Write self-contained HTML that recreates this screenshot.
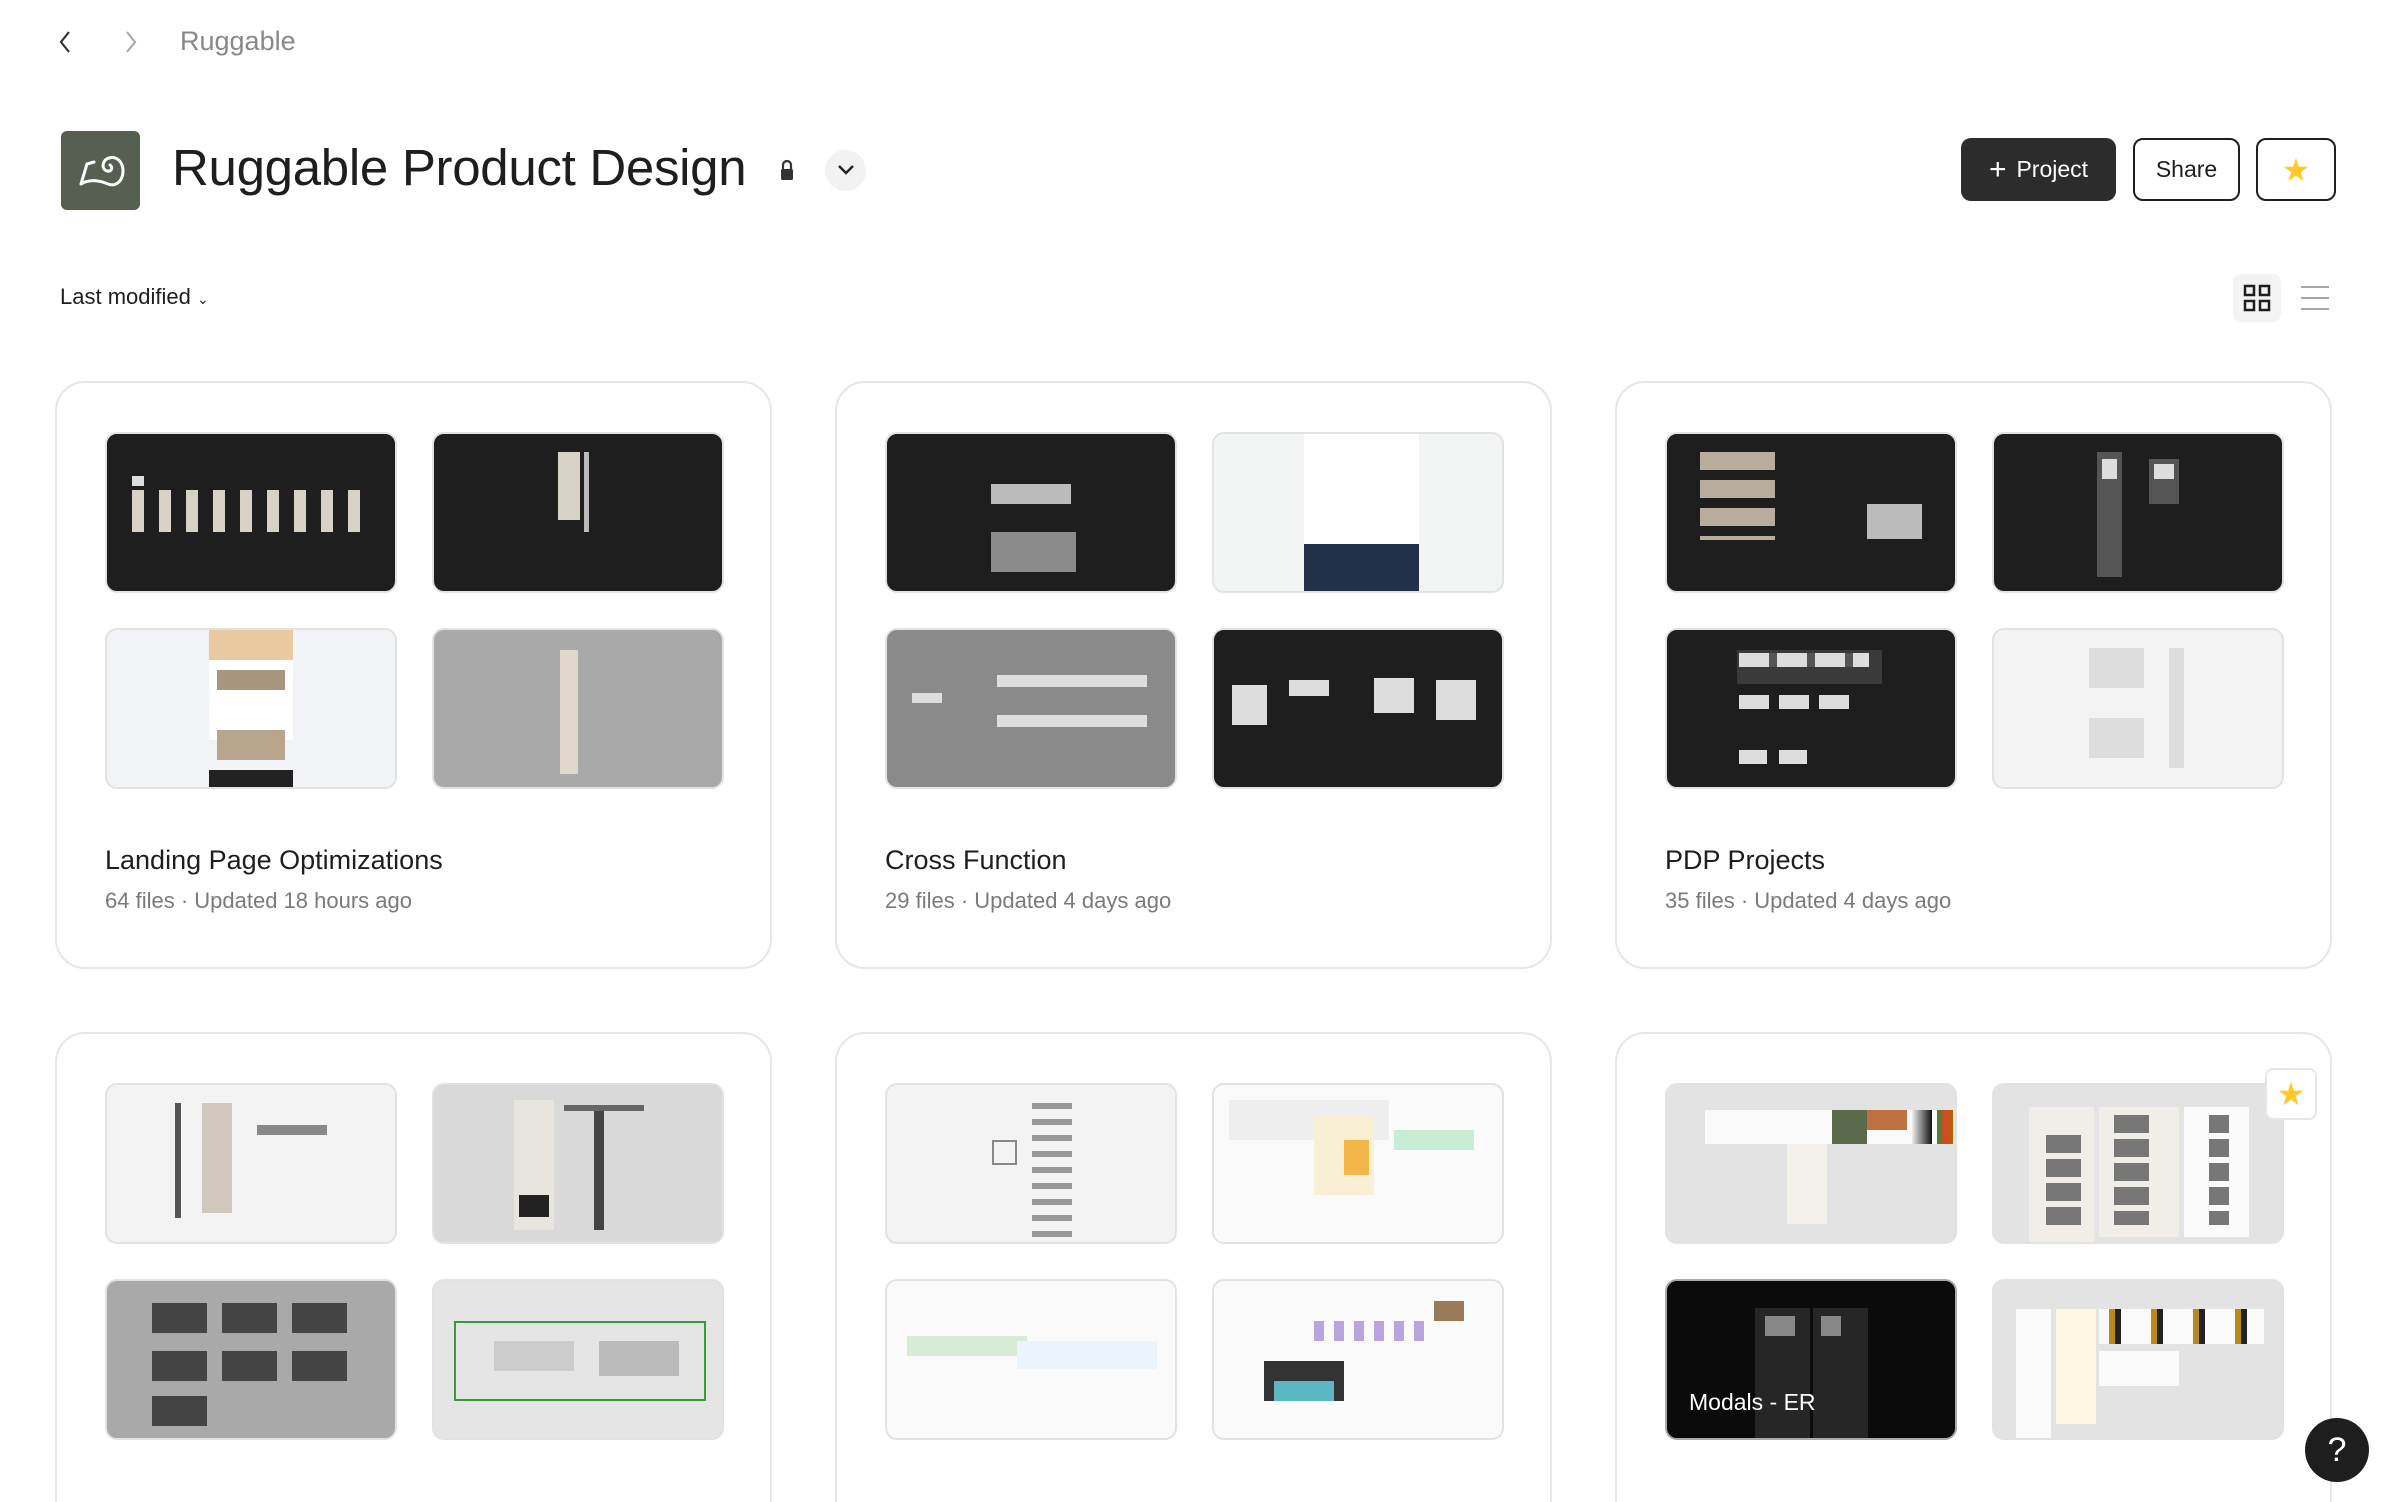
<!DOCTYPE html>
<html><head><meta charset="utf-8"><style>
*{margin:0;padding:0;box-sizing:border-box}
html{width:2384px;height:1502px;overflow:hidden}
body{width:2384px;height:1502px;background:#fff;font-family:"Liberation Sans",sans-serif;position:relative;overflow:hidden;color:#1e1e1e}
.a{position:absolute}
.card{position:absolute;width:717px;height:588px;border:2px solid #e6e6e6;border-radius:30px;background:#fff}
.th{position:absolute;width:292px;height:161px;border-radius:12px;border:2px solid #e2e2e2;overflow:hidden}
.th div{position:absolute}
.t1{position:absolute;left:48px;top:462px;font-size:27px;font-weight:500;color:#1e1e1e}
.t2{position:absolute;left:48px;top:505px;font-size:22px;color:#7a7a7a}
.btn{position:absolute;top:138px;height:63px;border-radius:10px;font-size:23px;display:flex;align-items:center;justify-content:center}
</style></head><body>
<svg class="a" style="left:58px;top:30px" width="14" height="24" viewBox="0 0 14 24"><path d="M11 2 L3 12 L11 22" fill="none" stroke="#333" stroke-width="2.2"/></svg>
<svg class="a" style="left:124px;top:30px" width="14" height="24" viewBox="0 0 14 24"><path d="M3 2 L11 12 L3 22" fill="none" stroke="#aaa" stroke-width="2.2"/></svg>
<div class="a" style="left:180px;top:26px;font-size:27px;color:#888">Ruggable</div>

<div class="a" style="left:61px;top:131px;width:79px;height:79px;border-radius:6px;background:#566050"></div>
<svg class="a" style="left:61px;top:131px" width="79" height="79" viewBox="0 0 79 79"><path d="M20 53 L26 33 L33 31 M20 53 C30 47 40 50 47 53 C55 56 62 50 62 40 C62 30 55 25 48 27 C41 29 40 38 46 40 C51 41 52 36 49 34" fill="none" stroke="#fff" stroke-width="3" stroke-linecap="round"/></svg>
<div class="a" style="left:172px;top:138px;font-size:51px;color:#1e1e1e;letter-spacing:-0.3px">Ruggable Product Design</div>
<svg class="a" style="left:779px;top:158px" width="16" height="24" viewBox="0 0 16 24"><path d="M4 11 V7 a4 4 0 0 1 8 0 V11" fill="none" stroke="#333" stroke-width="2.2"/><rect x="2" y="11" width="12" height="11" rx="1.5" fill="#333"/></svg>
<div class="a" style="left:825px;top:150px;width:41px;height:41px;border-radius:50%;background:#f2f2f2"></div>
<svg class="a" style="left:836px;top:163px" width="20" height="14" viewBox="0 0 20 14"><path d="M3 3 L10 10 L17 3" fill="none" stroke="#222" stroke-width="2.4"/></svg>

<div class="btn" style="left:1961px;width:155px;background:#2c2c2c;color:#fff;font-weight:500"><span style="font-size:30px;font-weight:300;margin-right:10px">+</span>Project</div>
<div class="btn" style="left:2133px;width:107px;border:2px solid #1e1e1e;color:#1e1e1e">Share</div>
<div class="btn" style="left:2256px;width:80px;border:2px solid #1e1e1e;color:#ffc928;font-size:32px">★</div>

<div class="a" style="left:60px;top:284px;font-size:22px;color:#1e1e1e">Last modified <span style="font-size:14px">&#8964;</span></div>
<div class="a" style="left:2233px;top:274px;width:48px;height:48px;border-radius:8px;background:#f3f3f3"></div>
<svg class="a" style="left:2243px;top:284px" width="28" height="28" viewBox="0 0 28 28"><g fill="none" stroke="#1e1e1e" stroke-width="2.5"><rect x="2" y="2" width="9" height="9"/><rect x="17" y="2" width="9" height="9"/><rect x="2" y="17" width="9" height="9"/><rect x="17" y="17" width="9" height="9"/></g></svg>
<svg class="a" style="left:2300px;top:285px" width="30" height="26" viewBox="0 0 30 26"><g stroke="#a6a6a6" stroke-width="2"><path d="M1 2H29M1 13H29M1 24H29"/></g></svg>

<!-- Row 1 -->
<div class="card" style="left:55px;top:381px">
 <div class="th" style="left:48px;top:49px;background:#1e1e1e"><div style="left:25px;top:56px;width:240px;height:42px;background:repeating-linear-gradient(90deg,#d8d2c6 0 12px,transparent 12px 27px)"></div><div style="left:25px;top:42px;width:12px;height:10px;background:#ddd"></div></div>
 <div class="th" style="left:375px;top:49px;background:#1e1e1e"><div style="left:124px;top:18px;width:22px;height:68px;background:#d8d2c6"></div><div style="left:150px;top:18px;width:5px;height:80px;background:#bbb"></div></div>
 <div class="th" style="left:48px;top:245px;background:#f2f3f7"><div style="left:102px;top:0;width:84px;height:30px;background:#e8c9a0"></div><div style="left:102px;top:30px;width:84px;height:80px;background:#fff"></div><div style="left:110px;top:40px;width:68px;height:20px;background:#a89580"></div><div style="left:102px;top:140px;width:84px;height:20px;background:#222"></div><div style="left:110px;top:100px;width:68px;height:30px;background:#b9a58c"></div></div>
 <div class="th" style="left:375px;top:245px;background:#a9a9a9"><div style="left:126px;top:20px;width:18px;height:124px;background:#e0d8cc"></div></div>
 <div class="t1">Landing Page Optimizations</div><div class="t2">64 files · Updated 18 hours ago</div>
</div>
<div class="card" style="left:835px;top:381px">
 <div class="th" style="left:48px;top:49px;background:#1e1e1e"><div style="left:104px;top:50px;width:80px;height:20px;background:#bbb"></div><div style="left:104px;top:98px;width:85px;height:40px;background:#8a8a8a"></div></div>
 <div class="th" style="left:375px;top:49px;background:#f3f4f4"><div style="left:90px;top:0;width:115px;height:110px;background:#fff"></div><div style="left:90px;top:110px;width:115px;height:50px;background:#223048"></div></div>
 <div class="th" style="left:48px;top:245px;background:#8a8a8a"><div style="left:110px;top:45px;width:150px;height:12px;background:#ddd"></div><div style="left:110px;top:85px;width:150px;height:12px;background:#ddd"></div><div style="left:25px;top:63px;width:30px;height:10px;background:#ddd"></div></div>
 <div class="th" style="left:375px;top:245px;background:#1e1e1e"><div style="left:18px;top:55px;width:35px;height:40px;background:#ddd"></div><div style="left:75px;top:50px;width:40px;height:16px;background:#ddd"></div><div style="left:160px;top:48px;width:40px;height:35px;background:#ddd"></div><div style="left:222px;top:50px;width:40px;height:40px;background:#ddd"></div></div>
 <div class="t1">Cross Function</div><div class="t2">29 files · Updated 4 days ago</div>
</div>
<div class="card" style="left:1615px;top:381px">
 <div class="th" style="left:48px;top:49px;background:#1e1e1e"><div style="left:33px;top:18px;width:75px;height:88px;background:repeating-linear-gradient(180deg,#b8ad9c 0 18px,transparent 18px 28px)"></div><div style="left:200px;top:70px;width:55px;height:35px;background:#bbb"></div></div>
 <div class="th" style="left:375px;top:49px;background:#1e1e1e"><div style="left:103px;top:18px;width:25px;height:125px;background:#555"></div><div style="left:155px;top:25px;width:30px;height:45px;background:#555"></div><div style="left:108px;top:25px;width:15px;height:20px;background:#ddd"></div><div style="left:160px;top:30px;width:20px;height:15px;background:#ddd"></div></div>
 <div class="th" style="left:48px;top:245px;background:#1e1e1e"><div style="left:70px;top:20px;width:145px;height:34px;background:#3a3a3a"></div><div style="left:72px;top:23px;width:130px;height:14px;background:repeating-linear-gradient(90deg,#ddd 0 30px,#555 30px 38px)"></div><div style="left:72px;top:65px;width:110px;height:14px;background:repeating-linear-gradient(90deg,#ddd 0 30px,#1e1e1e 30px 40px)"></div><div style="left:72px;top:120px;width:70px;height:14px;background:repeating-linear-gradient(90deg,#ddd 0 28px,#1e1e1e 28px 40px)"></div></div>
 <div class="th" style="left:375px;top:245px;background:#f3f3f3"><div style="left:95px;top:18px;width:55px;height:40px;background:#ddd"></div><div style="left:95px;top:88px;width:55px;height:40px;background:#ddd"></div><div style="left:175px;top:18px;width:15px;height:120px;background:#ddd"></div></div>
 <div class="t1">PDP Projects</div><div class="t2">35 files · Updated 4 days ago</div>
</div>

<!-- Row 2 -->
<div class="card" style="left:55px;top:1032px;height:520px">
 <div class="th" style="left:48px;top:49px;background:#f3f3f3"><div style="left:68px;top:18px;width:6px;height:115px;background:#555"></div><div style="left:95px;top:18px;width:30px;height:110px;background:#d0c8bc"></div><div style="left:150px;top:40px;width:70px;height:10px;background:#888"></div></div>
 <div class="th" style="left:375px;top:49px;background:#d9d9d9"><div style="left:80px;top:15px;width:40px;height:130px;background:#e8e4de"></div><div style="left:85px;top:110px;width:30px;height:22px;background:#222"></div><div style="left:160px;top:20px;width:10px;height:125px;background:#444"></div><div style="left:130px;top:20px;width:80px;height:6px;background:#666"></div></div>
 <div class="th" style="left:48px;top:245px;background:#a9a9a9"><div style="left:45px;top:22px;width:200px;height:30px;background:repeating-linear-gradient(90deg,#444 0 55px,transparent 55px 70px)"></div><div style="left:45px;top:70px;width:200px;height:30px;background:repeating-linear-gradient(90deg,#444 0 55px,transparent 55px 70px)"></div><div style="left:45px;top:115px;width:55px;height:30px;background:#444"></div></div>
 <div class="th" style="left:375px;top:245px;background:#e5e5e5"><div style="left:20px;top:40px;width:252px;height:80px;border:2px solid #3a9a3a;background:#e5e5e5"></div><div style="left:60px;top:60px;width:80px;height:30px;background:#ccc"></div><div style="left:165px;top:60px;width:80px;height:35px;background:#bbb"></div></div>
</div>
<div class="card" style="left:835px;top:1032px;height:520px">
 <div class="th" style="left:48px;top:49px;background:#f3f3f3"><div style="left:145px;top:18px;width:40px;height:140px;background:repeating-linear-gradient(180deg,#999 0 6px,transparent 6px 16px)"></div><div style="left:105px;top:55px;width:25px;height:25px;border:2px solid #888"></div></div>
 <div class="th" style="left:375px;top:49px;background:#fafafa"><div style="left:15px;top:15px;width:160px;height:40px;background:#eee"></div><div style="left:100px;top:30px;width:60px;height:80px;background:#f8efd4"></div><div style="left:130px;top:55px;width:25px;height:35px;background:#f3b64a"></div><div style="left:180px;top:45px;width:80px;height:20px;background:#c9ecd5"></div></div>
 <div class="th" style="left:48px;top:245px;background:#fafafa"><div style="left:20px;top:55px;width:120px;height:20px;background:#d7ecd7"></div><div style="left:130px;top:60px;width:140px;height:28px;background:#eaf4fa"></div></div>
 <div class="th" style="left:375px;top:245px;background:#fafafa"><div style="left:50px;top:80px;width:80px;height:40px;background:#333"></div><div style="left:60px;top:100px;width:60px;height:20px;background:#5ab8c4"></div><div style="left:100px;top:40px;width:120px;height:20px;background:repeating-linear-gradient(90deg,#b9a4e0 0 10px,transparent 10px 20px)"></div><div style="left:220px;top:20px;width:30px;height:20px;background:#9a7a5a"></div></div>
</div>
<div class="card" style="left:1615px;top:1032px;height:520px">
 <div class="th" style="left:48px;top:49px;background:#e3e3e3"><div style="left:38px;top:25px;width:240px;height:34px;background:#fafafa"></div><div style="left:165px;top:25px;width:35px;height:34px;background:#5a6a4a"></div><div style="left:200px;top:25px;width:40px;height:20px;background:#c07040"></div><div style="left:245px;top:25px;width:20px;height:34px;background:linear-gradient(90deg,#eee,#111)"></div><div style="left:270px;top:25px;width:16px;height:34px;background:linear-gradient(90deg,#2a8a3a,#d42,#a60)"></div><div style="left:120px;top:59px;width:40px;height:80px;background:#f3f1ea"></div></div>
 <div class="th" style="left:375px;top:49px;background:#e3e3e3"><div style="left:35px;top:22px;width:65px;height:140px;background:#f0eee6"></div><div style="left:105px;top:22px;width:80px;height:130px;background:#f0eee6"></div><div style="left:190px;top:22px;width:65px;height:130px;background:#fafafa"></div><div style="left:52px;top:50px;width:35px;height:90px;background:repeating-linear-gradient(180deg,#777 0 18px,transparent 18px 24px)"></div><div style="left:120px;top:30px;width:35px;height:110px;background:repeating-linear-gradient(180deg,#777 0 18px,transparent 18px 24px)"></div><div style="left:215px;top:30px;width:20px;height:110px;background:repeating-linear-gradient(180deg,#777 0 18px,transparent 18px 24px)"></div></div>
 <div class="th" style="left:48px;top:245px;background:#0b0b0b;border-color:#aaa"><div style="left:88px;top:27px;width:55px;height:130px;background:#262626"></div><div style="left:146px;top:27px;width:55px;height:130px;background:#262626"></div><div style="left:98px;top:35px;width:30px;height:20px;background:#888"></div><div style="left:154px;top:35px;width:20px;height:20px;background:#888"></div><div style="left:22px;top:108px;color:#fff;font-size:23px;white-space:nowrap">Modals - ER</div></div>
 <div class="th" style="left:375px;top:245px;background:#e3e3e3"><div style="left:22px;top:28px;width:35px;height:186px;background:#fafafa"></div><div style="left:62px;top:28px;width:40px;height:115px;background:#fdf7e4"></div><div style="left:105px;top:28px;width:165px;height:35px;background:repeating-linear-gradient(90deg,#fafafa 0 10px,#b98a1a 10px 16px,#222 16px 22px,#fafafa 22px 42px)"></div><div style="left:105px;top:70px;width:80px;height:35px;background:#fafafa"></div></div>
 <div class="a" style="left:648px;top:34px;width:52px;height:52px;border-radius:8px;border:2px solid #e6e6e6;background:#fff;color:#ffc928;font-size:32px;display:flex;align-items:center;justify-content:center">★</div>
</div>

<div class="a" style="left:2305px;top:1418px;width:64px;height:64px;border-radius:50%;background:#1e1e1e;color:#fff;font-size:34px;display:flex;align-items:center;justify-content:center;font-weight:300">?</div>
</body></html>
